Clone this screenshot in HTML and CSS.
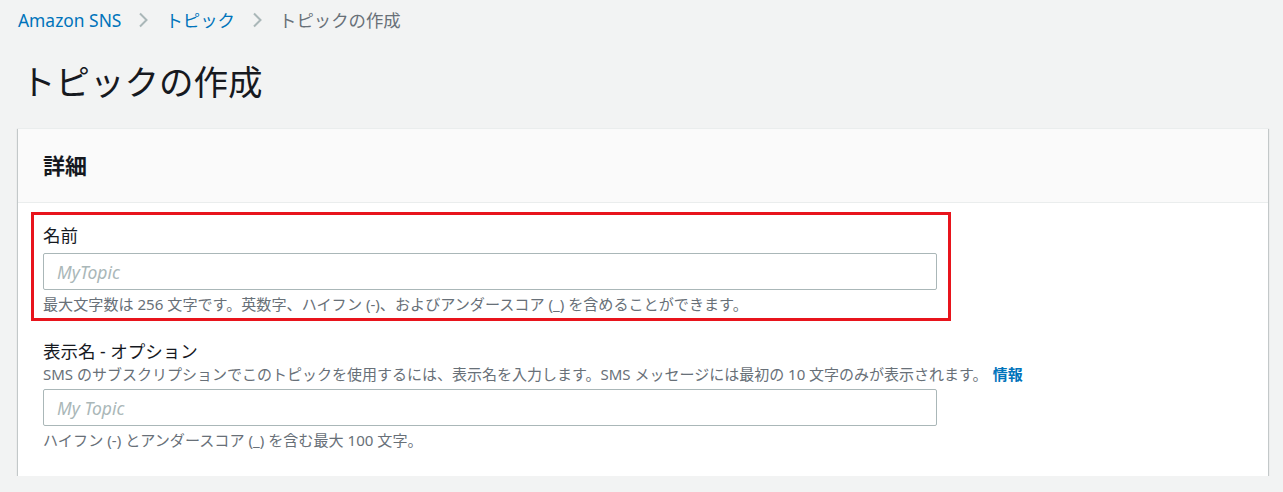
FILE: index.html
```html
<!DOCTYPE html>
<html lang="ja">
<head>
<meta charset="utf-8">
<title>トピックの作成</title>
<link rel="stylesheet" href="styles.css">
</head>
<body>
<div class="page">
  <nav class="breadcrumb">
    <a class="crumb-link" href="#">Amazon SNS</a>
    <svg class="chev" width="10" height="16" viewBox="0 0 10 16"><polyline points="2,1.5 8.5,8 2,14.5" fill="none" stroke="#aab7b8" stroke-width="2"/></svg>
    <a class="crumb-link" href="#">トピック</a>
    <svg class="chev" width="10" height="16" viewBox="0 0 10 16"><polyline points="2,1.5 8.5,8 2,14.5" fill="none" stroke="#aab7b8" stroke-width="2"/></svg>
    <span class="crumb-current">トピックの作成</span>
  </nav>
  <h1 class="title">トピックの作成</h1>
  <section class="card">
    <header class="card-header"><h2 class="card-title">詳細</h2></header>
    <div class="card-body">
      <div class="highlight">
        <div class="field">
          <label class="label">名前</label>
          <input class="input" type="text" placeholder="MyTopic">
          <div class="hint">最大文字数は 256 文字です。英数字、ハイフン (-)、およびアンダースコア (_) を含めることができます。</div>
        </div>
      </div>
      <div class="field field-second">
        <label class="label">表示名 - オプション</label>
        <div class="desc">SMS のサブスクリプションでこのトピックを使用するには、表示名を入力します。SMS メッセージには最初の 10 文字のみが表示されます。<a class="info" href="#">情報</a></div>
        <input class="input input-second" type="text" placeholder="My Topic">
        <div class="hint">ハイフン (-) とアンダースコア (_) を含む最大 100 文字。</div>
      </div>
    </div>
  </section>
</div>
</body>
</html>
```
FILE: styles.css
```css
* { box-sizing: border-box; }
html, body {
  margin: 0;
  padding: 0;
  background: #f2f3f3;
}
body {
  font-family: "Noto Sans", "Noto Sans CJK JP", sans-serif;
  color: #16191f;
}
.page {
  padding: 9px 15px 0 18px;
}
.breadcrumb {
  display: flex;
  align-items: center;
  height: 22px;
  font-size: 17.4px;
  line-height: 22px;
  gap: 17px;
}
.crumb-link {
  color: #0073bb;
  text-decoration: none;
}
.crumb-current {
  color: #687078;
}
.chev { display: block; }
.title {
  margin: 30px 0 0 3px;
  font-size: 34.5px;
  font-weight: 400;
  line-height: 42px;
  color: #16191f;
}
.card {
  margin-top: 25px;
  background: #fff;
  border-top: 1px solid #eaeded;
  box-shadow: 0 1px 1px 0 rgba(0,28,36,.3), 1px 1px 1px 0 rgba(0,28,36,.15), -1px 1px 1px 0 rgba(0,28,36,.15);
}
.card-header {
  background: #fafafa;
  border-bottom: 1px solid #eaeded;
  padding: 22px 25px 23px;
}
.card-title {
  margin: 0;
  font-size: 22px;
  font-weight: 700;
  line-height: 28px;
}
.card-body {
  padding: 9px 25px 27px;
}
.highlight {
  width: 920px;
  margin-left: -12px;
  border: 3px solid #e8141c;
  padding: 9px 11px 5px 9px;
}
.field {
  display: flex;
  flex-direction: column;
  width: 894px;
}
.highlight .field { width: 100%; }
.field-second { margin-top: 19px; }
.label {
  font-size: 17.5px;
  line-height: 22px;
  color: #16191f;
}
.input {
  margin-top: 7px;
  height: 37px;
  width: 100%;
  border: 1px solid #aab7b8;
  border-radius: 2px;
  padding: 0 13px;
  font-family: inherit;
  font-size: 17.5px;
  background: #fff;
}
.input::placeholder {
  color: #aab7b8;
  font-style: italic;
}
.input-second { margin-top: 6px; }
.hint {
  margin-top: 5px;
  font-size: 15.1px;
  line-height: 18px;
  color: #687078;
}
.desc {
  margin-top: 3px;
  font-size: 15px;
  line-height: 18px;
  color: #687078;
  white-space: nowrap;
}
.info {
  margin-left: 5px;
  color: #0073bb;
  font-weight: 700;
  text-decoration: none;
}
```
